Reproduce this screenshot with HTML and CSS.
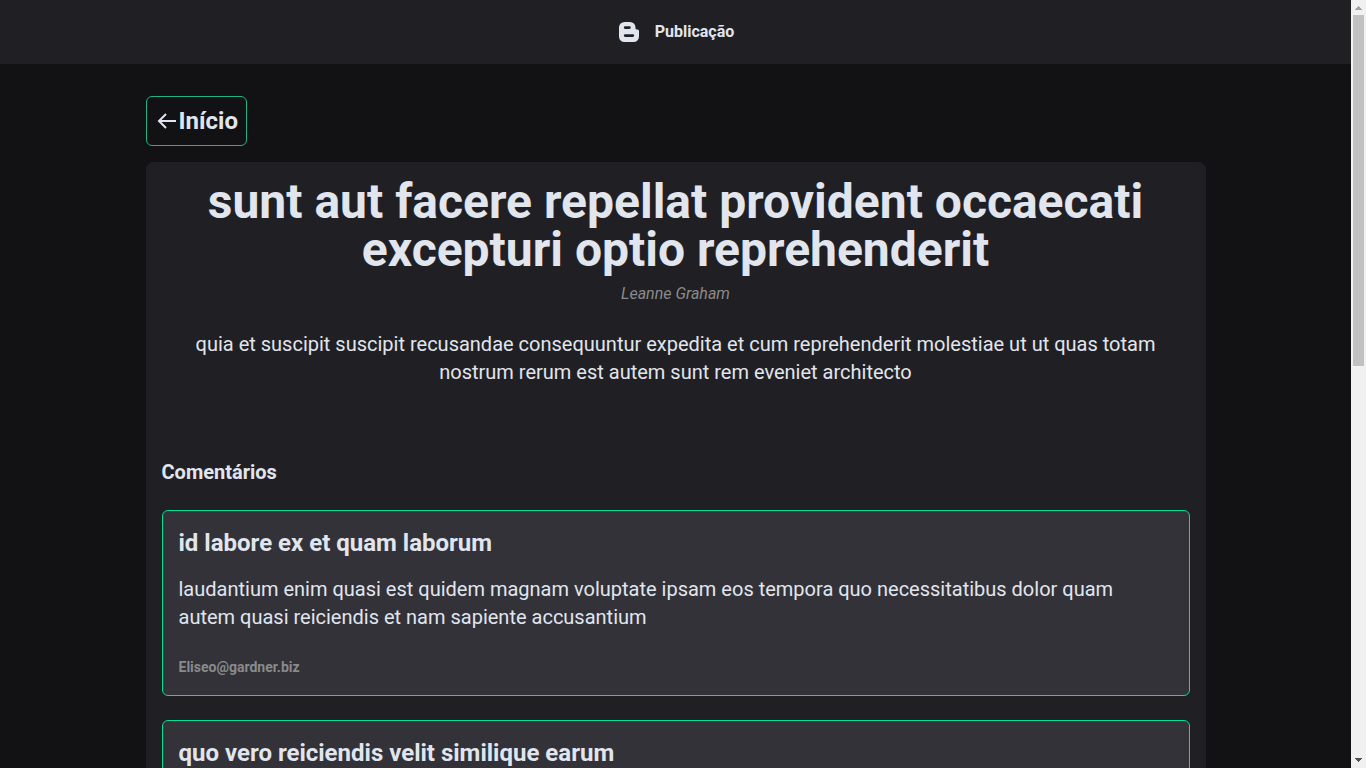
FILE: index.html
```html
<!DOCTYPE html>
<html lang="pt-BR">
<head>
<meta charset="utf-8">
<meta name="viewport" content="width=device-width, initial-scale=1">
<title>Publicação</title>
<link rel="stylesheet" href="styles.css">
</head>
<body>
<div class="page">
  <header class="header">
    <svg class="icon" viewBox="0 0 24 24" aria-hidden="true"><path fill="currentColor" fill-rule="evenodd" d="M7.500 2h5.500a5.500 5.500 0 0 1 5.500 5.500v.7c0 .8.400 1.200 1.100 1.200h.7c1 0 1.700.7 1.700 1.700v5.400a5.500 5.500 0 0 1-5.500 5.500h-9A5.500 5.500 0 0 1 2 16.500v-9A5.500 5.500 0 0 1 7.500 2zM8.200 6.200a1.400 1.400 0 0 0 0 2.800h4.200a1.400 1.400 0 0 0 0-2.800zM8.200 14.200a1.400 1.400 0 0 0 0 2.800h7.600a1.400 1.400 0 0 0 0-2.800z"/></svg>
    <span class="header-title">Publicação</span>
  </header>
  <main class="content">
    <a class="back" href="#"><svg class="icon" viewBox="0 0 24 24" aria-hidden="true"><path fill="none" stroke="currentColor" stroke-width="2" d="M21 12H4M11 5l-7 7 7 7"/></svg>Início</a>
    <article class="post">
      <h1 class="post-title">sunt aut facere repellat provident occaecati excepturi optio reprehenderit</h1>
      <p class="post-author">Leanne Graham</p>
      <p class="post-body">quia et suscipit suscipit recusandae consequuntur expedita et cum reprehenderit molestiae ut ut quas totam nostrum rerum est autem sunt rem eveniet architecto</p>
      <h2 class="comments-title">Comentários</h2>
      <section class="comments">
        <div class="comment">
          <h3 class="comment-title">id labore ex et quam laborum</h3>
          <p class="comment-body">laudantium enim quasi est quidem magnam voluptate ipsam eos tempora quo necessitatibus dolor quam autem quasi reiciendis et nam sapiente accusantium</p>
          <p class="comment-email">Eliseo@gardner.biz</p>
        </div>
        <div class="comment">
          <h3 class="comment-title">quo vero reiciendis velit similique earum</h3>
        </div>
      </section>
    </article>
  </main>
</div>
<div class="scrollbar" aria-hidden="true">
  <svg class="scroll-arrow" viewBox="0 0 15 15" shape-rendering="crispEdges"><path fill="#a3a3a3" d="M7 6h1v1h1v1h1v1h1v1H4V9h1V8h1V7h1z"/></svg>
  <div class="scroll-track"><div class="scroll-thumb"></div></div>
  <svg class="scroll-arrow" viewBox="0 0 15 15" shape-rendering="crispEdges"><path fill="#505050" d="M4 5h7v1h-1v1H9v1H8v1H7V8H6V7H5V6H4z"/></svg>
</div>
</body>
</html>
```
FILE: styles.css
```css
* { box-sizing: border-box; margin: 0; }
body {
  display: flex;
  height: 100vh;
  overflow: hidden;
  background: #121214;
  color: #e1e5ee;
  font-family: Roboto, sans-serif;
}
.page { flex: 1; min-width: 0; height: 100%; overflow-y: auto; scrollbar-width: none; }
.scrollbar { display: flex; flex-direction: column; width: 15px; background: #f1f1f1; }
.scroll-arrow { display: block; width: 15px; height: 15px; flex: none; }
.scroll-track { flex: 1; padding: 0 2px; }
.scroll-thumb { height: 47.5%; background: #c1c1c1; }
.header {
  height: 64px;
  display: flex;
  align-items: center;
  justify-content: center;
  gap: 14px;
  background: #202024;
}
.icon { width: 24px; height: 24px; flex: none; }
.header-title { font-size: 16px; line-height: 24px; font-weight: 700; }
.content { max-width: 1060px; margin: 0 auto; padding: 32px 0; }
.back {
  display: inline-flex;
  align-items: center;
  padding: 8px;
  border: 1px solid #1fb485;
  border-radius: 6px;
  color: inherit;
  font-size: 24px;
  line-height: 32px;
  font-weight: 700;
  text-decoration: none;
  vertical-align: top;
}
.post { margin-top: 16px; padding: 16px; border-radius: 8px; background: #202024; }
.post-title { font-size: 48px; line-height: 48px; font-weight: 700; text-align: center; }
.post-author { margin-top: 8px; font-size: 16px; line-height: 24px; font-style: italic; text-align: center; color: #8a8a8a; }
.post-body { margin-top: 24px; padding: 0 16px; font-size: 20px; line-height: 28px; text-align: center; }
.comments-title { margin: 72px 0 24px; font-size: 20px; line-height: 28px; font-weight: 700; }
.comments { display: grid; gap: 24px; }
.comment { min-height: 186px; padding: 16px; border: 1px solid #00e096; border-radius: 6px; background: #323238; }
.comment-title { font-size: 24px; line-height: 32px; font-weight: 700; }
.comment-body { margin-top: 16px; font-size: 20px; line-height: 28px; }
.comment-email { margin-top: 24px; font-size: 14px; line-height: 24px; font-weight: 700; color: #8a8a8a; }
```
